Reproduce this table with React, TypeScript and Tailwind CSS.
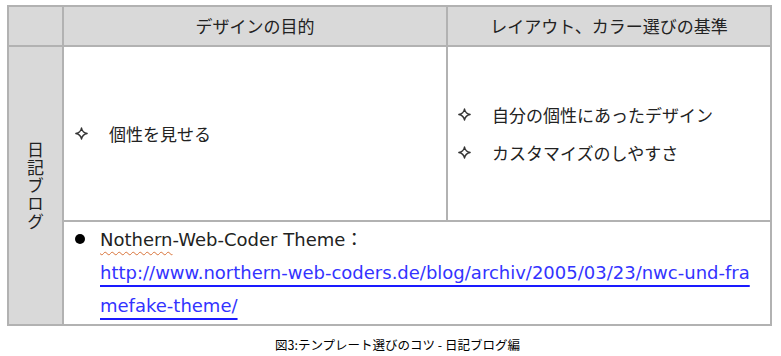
import React from "react";

const jp = "font-['Noto_Sans_CJK_JP',sans-serif]";
const latin = "font-['DejaVu_Sans','Noto_Sans_CJK_JP',sans-serif]";

function Sparkle() {
  return (
    <svg width="13" height="13" viewBox="0 0 13 13" className="shrink-0">
      <path
        d="M6.5 0.8 Q7.3 5.7 12.2 6.5 Q7.3 7.3 6.5 12.2 Q5.7 7.3 0.8 6.5 Q5.7 5.7 6.5 0.8Z"
        fill="none"
        stroke="#333"
        strokeWidth="1.3"
        strokeLinejoin="round"
      />
    </svg>
  );
}

export default function App() {
  return (
    <div className={`w-[781px] h-[356px] bg-white text-[#222] ${jp}`}>
      {/* Table */}
      <div className="pt-[5px] pl-[7px]">
        <div className="grid grid-cols-[53px_382px_322px] grid-rows-[38px_173px_102px] gap-[2px] p-[2px] bg-[#b2b2b2] w-[765px]">
          <div className="bg-[#d9d9d9]" />
          <div className="bg-[#d9d9d9] flex items-center justify-center text-[17px]">デザインの目的</div>
          <div className="bg-[#d9d9d9] flex items-center justify-center text-[17px]">レイアウト、カラー選びの基準</div>

          <div className="row-span-2 bg-[#d9d9d9] flex items-center justify-center">
            <span className="[writing-mode:vertical-rl] text-[17px] leading-none tracking-[1px]">日記ブログ</span>
          </div>

          <div className="bg-white flex items-center pl-[11px] text-[17px]">
            <Sparkle />
            <span className="ml-[21px]">個性を見せる</span>
          </div>

          <div className="bg-white flex flex-col justify-center gap-[12px] pl-[10px] text-[17px]">
            <div className="flex items-center">
              <Sparkle />
              <span className="ml-[21px]">自分の個性にあったデザイン</span>
            </div>
            <div className="flex items-center">
              <Sparkle />
              <span className="ml-[21px]">カスタマイズのしやすさ</span>
            </div>
          </div>

          <div className={`col-span-2 bg-white flex pl-[11px] pt-[0px] text-[18px] leading-[33px] ${latin}`}>
            <div className="w-[25px] shrink-0 flex items-start pt-[12px]">
              <span className="w-[10px] h-[10px] rounded-full bg-black" />
            </div>
            <div>
              <div>
                <span className="underline decoration-wavy decoration-[#d8733a] decoration-1 underline-offset-[5px]">Nothern</span>
                -Web-Coder Theme<span className={jp}>：</span>
              </div>
              <a className="text-[#3333ff] underline decoration-[#1a1aff] decoration-2 underline-offset-[6px]">
                http://www.northern-web-coders.de/blog/archiv/2005/03/23/nwc-und-fra
              </a>
              <br />
              <a className="text-[#3333ff] underline decoration-[#1a1aff] decoration-2 underline-offset-[6px]">
                mefake-theme/
              </a>
            </div>
          </div>
        </div>
      </div>

      {/* Caption */}
      <div className="mt-[11px] pl-[14px] text-center text-[12.5px] leading-[16px] text-black">
        図3:テンプレート選びのコツ - 日記ブログ編
      </div>
    </div>
  );
}
